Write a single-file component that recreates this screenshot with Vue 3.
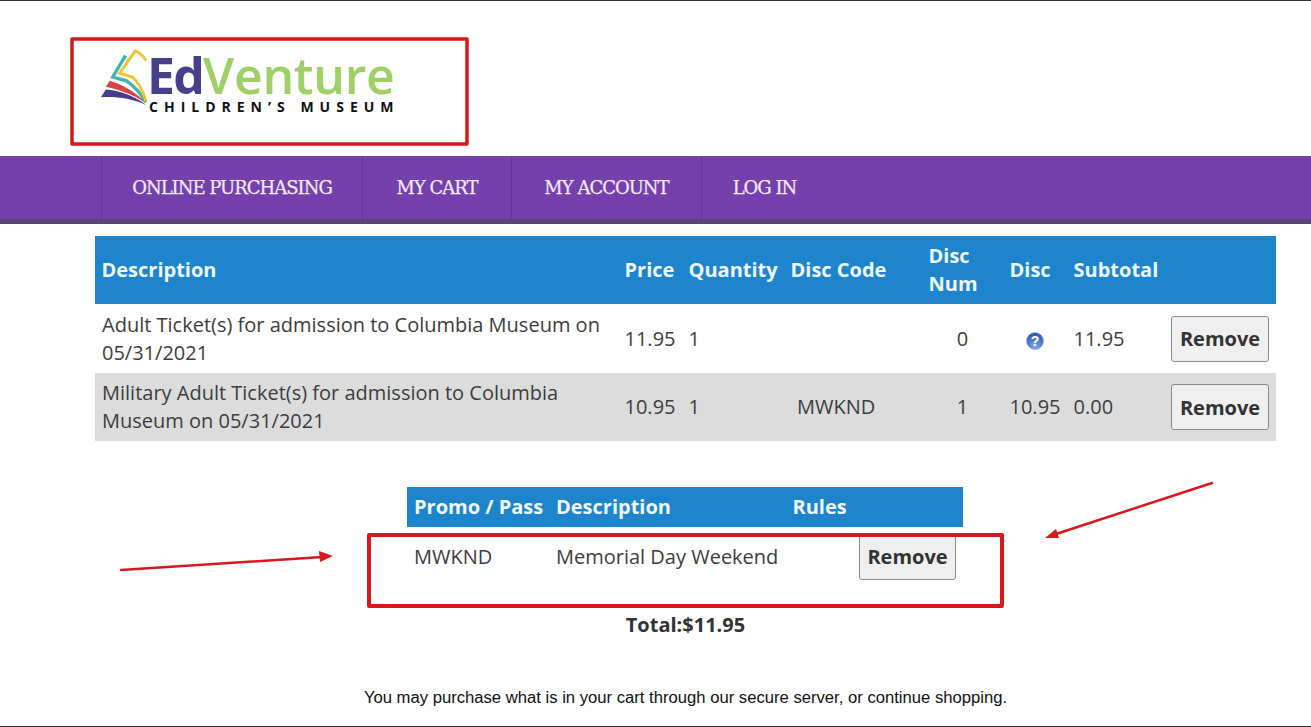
<script setup>
const cartRows = [
  { desc: 'Adult Ticket(s) for admission to Columbia Museum on 05/31/2021', price: '11.95', qty: '1', code: '', num: '0', disc: '', help: true, sub: '11.95' },
  { desc: 'Military Adult Ticket(s) for admission to Columbia Museum on 05/31/2021', price: '10.95', qty: '1', code: 'MWKND', num: '1', disc: '10.95', help: false, sub: '0.00' }
]
const navItems = ['ONLINE PURCHASING', 'MY CART', 'MY ACCOUNT', 'LOG IN']
</script>

<template>
  <div class="page">
    <header class="top">
      <div class="logo">
        <svg class="mark" width="49" height="60" viewBox="0 0 50 62" preserveAspectRatio="none">
          <path d="M1 52 L6 44 C20 45 36 51 47 60 C32 53 16 51 1 52 Z" fill="#473f8a" />
          <path d="M6 41 L10 35 C24 39 38 48 47 58 C36 50 20 44 6 41 Z" fill="#d9434a" />
          <path d="M26 9 L13 31 L27 35 C36 41 42 49 47 57" fill="none" stroke="#3fb5b0" stroke-width="3.4" />
          <path d="M47 14 C44 9 41 6 36 4 L20 27 L33 31 C40 37 44 46 47 56" fill="none" stroke="#edc92f" stroke-width="3" />
        </svg>
        <div class="wordmark">
          <div class="brand"><span class="ed">Ed</span><span class="venture">Venture</span></div>
          <div class="sub">CHILDREN’S MUSEUM</div>
        </div>
      </div>
    </header>

    <nav class="nav">
      <a v-for="item in navItems" :key="item" class="nav-item">{{ item }}</a>
    </nav>

    <main class="content">
      <table class="cart">
        <colgroup>
          <col style="width: 523px" /><col style="width: 64px" /><col style="width: 102px" /><col style="width: 138px" />
          <col style="width: 81px" /><col style="width: 64px" /><col style="width: 97px" /><col style="width: 112px" />
        </colgroup>
        <thead>
          <tr>
            <th>Description</th><th>Price</th><th>Quantity</th><th>Disc Code</th>
            <th class="num-head">Disc Num</th><th>Disc</th><th>Subtotal</th><th></th>
          </tr>
        </thead>
        <tbody>
          <tr v-for="(row, i) in cartRows" :key="i" :class="{ alt: i === 1 }">
            <td class="desc">{{ row.desc }}</td>
            <td>{{ row.price }}</td>
            <td>{{ row.qty }}</td>
            <td class="code">{{ row.code }}</td>
            <td class="center">{{ row.num }}</td>
            <td :class="{ center: row.help }">
              <svg v-if="row.help" class="help" width="20" height="20" viewBox="0 0 20 20">
                <defs>
                  <radialGradient id="helpFill" cx="50%" cy="80%" r="75%">
                    <stop offset="0" stop-color="#7fa8ee" />
                    <stop offset="1" stop-color="#2a52ad" />
                  </radialGradient>
                </defs>
                <circle cx="10" cy="10" r="8.6" fill="url(#helpFill)" stroke="#a9c2ec" />
                <text x="10" y="15" text-anchor="middle" class="help-mark">?</text>
              </svg>
              <template v-else>{{ row.disc }}</template>
            </td>
            <td>{{ row.sub }}</td>
            <td class="action"><button class="remove" type="button">Remove</button></td>
          </tr>
        </tbody>
      </table>

      <table class="promo">
        <colgroup>
          <col style="width: 142px" /><col style="width: 237px" /><col style="width: 177px" />
        </colgroup>
        <thead>
          <tr><th class="keep">Promo / Pass</th><th class="keep">Description</th><th>Rules</th></tr>
        </thead>
        <tbody>
          <tr>
            <td class="keep">MWKND</td>
            <td class="keep">Memorial Day Weekend</td>
            <td class="promo-action"><button class="remove small" type="button">Remove</button></td>
          </tr>
        </tbody>
      </table>

      <div class="total">Total:$11.95</div>
      <p class="note">You may purchase what is in your cart through our secure server, or continue shopping.</p>
    </main>

    <svg class="marks" width="1311" height="727" viewBox="0 0 1311 727">
      <g fill="none" stroke="#d8181d" stroke-linejoin="round">
        <rect x="72" y="39" width="395" height="105" stroke-width="3.5" />
        <rect x="369" y="535" width="633" height="71" stroke-width="4" />
        <path d="M121 570 L322 557" stroke-width="2.5" stroke-linecap="round" />
        <path d="M1212 483 L1056 534" stroke-width="2.5" stroke-linecap="round" />
      </g>
      <path d="M333 556 L319 551 L320 562 Z" fill="#d8181d" />
      <path d="M1045 538 L1056 529 L1059 538 Z" fill="#d8181d" />
    </svg>
  </div>
</template>

<style>
html, body { margin: 0; background: #fff; overflow: hidden; }
</style>

<style scoped>
.page {
  position: relative;
  box-sizing: border-box;
  width: 1311px;
  height: 727px;
  overflow: hidden;
  background: #fff;
  border-top: 1px solid #333;
  border-bottom: 1px solid #333;
  font-family: "Open Sans", "Liberation Sans", sans-serif;
  color: #333;
}
.top {
  height: 155px;
  box-sizing: border-box;
  padding: 49px 0 0 100px;
}
.logo { display: flex; align-items: flex-start; }
.mark { flex: none; margin-top: -3px; }
.wordmark { margin-left: -2px; width: 260px; }
.brand {
  margin-top: 3px;
  font-family: "Open Sans", sans-serif;
  font-size: 50px;
  line-height: 44px;
  font-weight: 700;
  letter-spacing: -1.8px;
  white-space: nowrap;
}
.ed { color: #473f8a; }
.venture { color: #9fd066; font-weight: 600; letter-spacing: -0.3px; }
.sub {
  margin: 2px 0 0 2px;
  font-family: "Open Sans", sans-serif;
  font-size: 14px;
  line-height: 16px;
  font-weight: 700;
  letter-spacing: 6px;
  color: #111;
  white-space: nowrap;
}
.nav {
  display: grid;
  grid-template-columns: 261px 149px 190px 126px;
  box-sizing: border-box;
  height: 68px;
  padding-left: 101px;
  background: #7440ab;
  border-bottom: 5px solid #5d4372;
}
.nav-item {
  box-sizing: border-box;
  display: flex;
  align-items: center;
  justify-content: center;
  border-left: 1px solid #62378f;
  font-family: "DejaVu Serif", "Liberation Serif", serif;
  font-size: 18px;
  letter-spacing: -1px;
  -webkit-text-stroke: 0.25px #f1eaf6;
  color: #f1eaf6;
  white-space: nowrap;
}
.content { padding: 12px 35px 0 95px; }
table { border-collapse: collapse; table-layout: fixed; }
.cart { width: 1181px; }
th {
  background: #1e84cc;
  color: #eef8fc;
  font-size: 20px;
  line-height: 28px;
  font-weight: 700;
  text-align: left;
  padding: 0 6.5px;
  white-space: nowrap;
}
.cart thead tr { height: 68px; }
.num-head { white-space: normal; }
td {
  font-size: 20px;
  line-height: 28px;
  padding: 0 6.5px;
  vertical-align: middle;
  font-weight: 400;
  color: #3d3d3d;
}
td.desc { padding-left: 7px; }
.cart tbody tr { height: 68px; }
.cart tbody tr:first-child { height: 69px; }
.alt td { background: #dcdcdc; }
.code { padding-left: 13px; }
.center { text-align: center; }
td.action { padding: 0 7px; }
.help { display: block; margin: 4px auto 0; }
.help-mark { font-size: 14px; font-weight: 700; fill: #fff; font-family: "Liberation Sans", sans-serif; }
.remove {
  box-sizing: border-box;
  width: 98px;
  height: 46px;
  padding: 0;
  display: block;
  background: #efefef;
  border: 1px solid #8a8a8a;
  border-radius: 3px;
  font-family: inherit;
  font-size: 20px;
  font-weight: 700;
  color: #333;
}
.small { width: 97px; padding-bottom: 2px; }
.promo { width: 556px; margin: 46px 0 0 312px; }
.promo thead tr { height: 40px; }
.promo .keep { padding-left: 7px; }
.promo tbody td { padding-top: 7px; padding-bottom: 7px; vertical-align: top; line-height: 46px; }
td.promo-action { padding-left: 73px; }
.total {
  margin-top: 25px;
  text-align: center;
  font-size: 20px;
  line-height: 26px;
  font-weight: 700;
}
.note {
  margin: 50px 0 0;
  text-align: center;
  font-family: "Liberation Sans", Arial, sans-serif;
  font-size: 16.65px;
  line-height: 20px;
  color: #111;
}
.marks { position: absolute; left: 0; top: -1px; pointer-events: none; }
</style>
